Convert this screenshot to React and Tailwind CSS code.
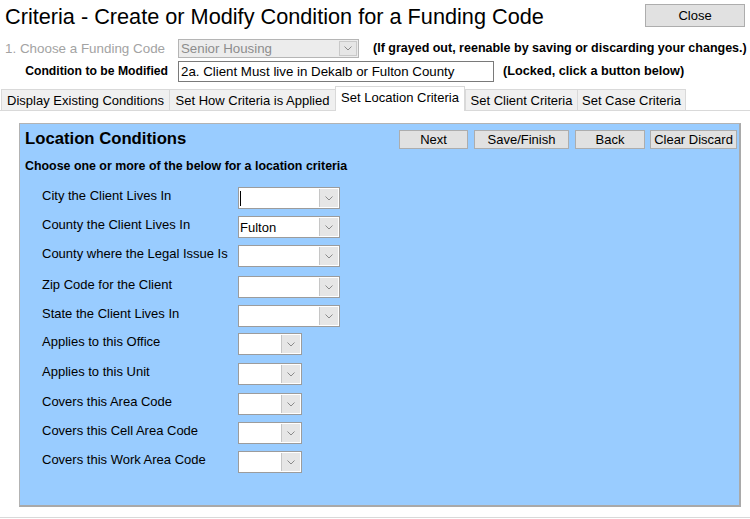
import React from 'react';

const rows = [
  { label: 'City the Client Lives In', value: '', wide: true, cursor: true, gap: 'mt-[13px]' },
  { label: 'County the Client Lives In', value: 'Fulton', wide: true, gap: 'mt-[7px]' },
  { label: 'County where the Legal Issue Is', value: '', wide: true, gap: 'mt-[7px]' },
  { label: 'Zip Code for the Client', value: '', wide: true, gap: 'mt-[9px]' },
  { label: 'State the Client Lives In', value: '', wide: true, gap: 'mt-[7px]' },
  { label: 'Applies to this Office', value: '', wide: false, gap: 'mt-[6px]' },
  { label: 'Applies to this Unit', value: '', wide: false, gap: 'mt-[8px]' },
  { label: 'Covers this Area Code', value: '', wide: false, gap: 'mt-[8px]' },
  { label: 'Covers this Cell Area Code', value: '', wide: false, gap: 'mt-[7px]' },
  { label: 'Covers this Work Area Code', value: '', wide: false, gap: 'mt-[7px]' },
];

const tabs = [
  { name: 'Display Existing Conditions', w: 'w-[168px]' },
  { name: 'Set How Criteria is Applied', w: 'w-[166px]' },
  { name: 'Set Location Criteria', w: 'w-[130px]', active: true },
  { name: 'Set Client Criteria', w: 'w-[112px]' },
  { name: 'Set Case Criteria', w: 'w-[109px]', last: true },
];

const Chevron = () => (
  <svg width="8" height="5" viewBox="0 0 8 5" fill="none">
    <polyline points="0.5,0.5 4,4 7.5,0.5" stroke="#8a8a8a" strokeWidth="1" />
  </svg>
);

const Combo = ({ value, wide, cursor }) => (
  <div
    className={`flex h-[22px] border border-[#9c9c9c] bg-white ${wide ? 'w-[102px]' : 'w-[64px]'}`}
  >
    <div className="flex-1 flex items-center pl-[1px] text-[13px] text-black leading-none">
      {cursor && <span className="w-px h-[15px] bg-black" />}
      {value}
    </div>
    <div className="w-[19px] flex items-center justify-center bg-[#e6e6e6] border-l border-[#c6c6c6] m-px ml-0">
      <Chevron />
    </div>
  </div>
);

const Btn = ({ children, className }) => (
  <button
    className={`h-[19px] bg-[#e1e1e1] border border-[#adadad] text-[13px] leading-none text-black flex items-center justify-center ${className}`}
  >
    {children}
  </button>
);

const App = () => {
  return (
    <div className="w-[750px] h-[519px] bg-white overflow-hidden font-['Liberation_Sans',Arial,sans-serif] text-black">
      {/* Title */}
      <div className="flex justify-between h-[39px]">
        <h1 className="pl-[5px] pt-[5px] text-[21.7px] leading-[24px]">
          Criteria - Create or Modify Condition for a Funding Code
        </h1>
        <button className="mt-[4px] mr-[5px] w-[100px] h-[23px] bg-[#e1e1e1] border border-[#adadad] text-[13px] leading-none">
          Close
        </button>
      </div>

      {/* Funding code */}
      <div className="flex items-center h-[19px]">
        <div className="w-[178px] pl-[5px] text-[13.4px] text-[#a3a3a3] leading-none">1. Choose a Funding Code</div>
        <div className="flex w-[181px] h-[19px] border border-[#b5b5b5] bg-[#ececec]">
          <div className="flex-1 flex items-center pl-[2px] text-[13.3px] text-[#8d8d8d] leading-none">Senior Housing</div>
          <div className="w-[18px] flex items-center justify-center border border-[#c9c9c9] bg-[#e6e6e6] m-px">
            <Chevron />
          </div>
        </div>
        <div className="ml-[14px] text-[12.5px] font-bold leading-none whitespace-nowrap">
          (If grayed out, reenable by saving or discarding your changes.)
        </div>
      </div>

      {/* Condition */}
      <div className="flex items-center h-[21px] mt-[3px]">
        <div className="w-[178px] pr-[10px] text-right text-[12.2px] font-bold leading-none">Condition to be Modified</div>
        <div className="w-[316px] h-[21px] flex items-center border border-[#7a7a7a] pl-[2px] text-[13.3px] leading-none">
          2a. Client Must live in Dekalb or Fulton County
        </div>
        <div className="ml-[9px] text-[12.7px] font-bold leading-none">(Locked, click a button below)</div>
      </div>

      {/* Tabs */}
      <div className="flex items-end h-[24px] mt-[4px] pl-[1px]">
        {tabs.map((t) =>
          t.active ? (
            <div
              key={t.name}
              className={`${t.w} h-[25px] -mb-px relative z-10 bg-white border-t border-x border-[#d9d9d9] flex items-start justify-center pt-[4px] text-[13px] leading-none`}
            >
              {t.name}
            </div>
          ) : (
            <div
              key={t.name}
              className={`${t.w} h-[21px] bg-[#f0f0f0] border-t border-l border-[#d9d9d9] ${t.last ? 'border-r' : ''} flex items-center justify-center text-[13px] leading-none`}
            >
              {t.name}
            </div>
          )
        )}
      </div>

      {/* Tab panel */}
      <div className="h-[408px] border-y border-[#d9d9d9] pt-[12px] pl-[19px]">
        <div className="w-[722px] h-[384px] bg-[#99ccff] border-t border-l border-[#b3b3b3] border-r-2 border-b-2 border-r-[#a9a9a9] border-b-[#a9a9a9] flex flex-col">
          <div className="flex items-center mt-[6px] pl-[5px]">
            <div className="flex-1 text-[16.7px] font-bold leading-none">Location Conditions</div>
            <div className="flex gap-[6px] pr-[2px]">
              <Btn className="w-[69px]">Next</Btn>
              <Btn className="w-[95px]">Save/Finish</Btn>
              <Btn className="w-[70px]">Back</Btn>
              <Btn className="w-[87px] -ml-px">Clear Discard</Btn>
            </div>
          </div>
          <div className="mt-[9px] pl-[5px] h-[16px] flex items-center text-[12.4px] font-bold leading-none">
            Choose one or more of the below for a location criteria
          </div>
          {rows.map((r) => (
            <div key={r.label} className={`flex items-start pl-[22px] ${r.gap}`}>
              <div className="w-[196px] h-[16px] flex items-center text-[13px] leading-none">{r.label}</div>
              <Combo value={r.value} wide={r.wide} cursor={r.cursor} />
            </div>
          ))}
        </div>
      </div>
    </div>
  );
};

export default App;
